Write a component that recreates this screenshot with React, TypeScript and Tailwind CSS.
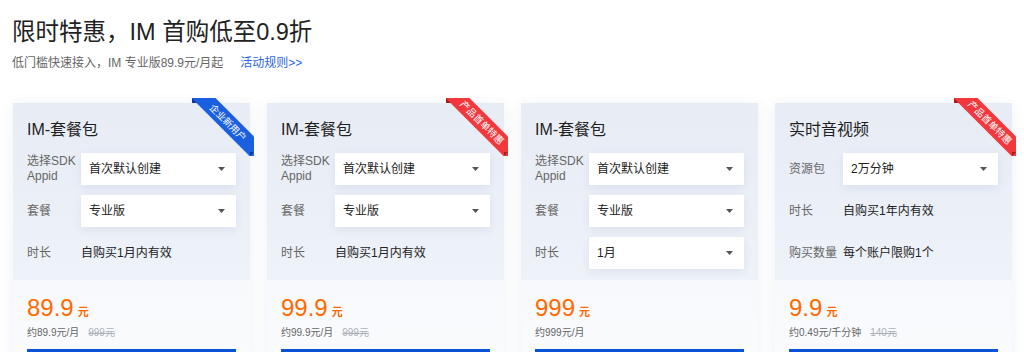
import React from "react";

type Row =
  | { kind: "select"; label: string; value: string }
  | { kind: "text"; label: string; value: string };

type Card = {
  title: string;
  ribbon?: { text: string; color: "blue" | "red" };
  rows: Row[];
  price: string;
  sub: string;
  orig?: string;
};

const cards: Card[] = [
  {
    title: "IM-套餐包",
    ribbon: { text: "企业新用户", color: "blue" },
    rows: [
      { kind: "select", label: "选择SDK Appid", value: "首次默认创建" },
      { kind: "select", label: "套餐", value: "专业版" },
      { kind: "text", label: "时长", value: "自购买1月内有效" },
    ],
    price: "89.9",
    sub: "约89.9元/月",
    orig: "999元",
  },
  {
    title: "IM-套餐包",
    ribbon: { text: "产品首单特惠", color: "red" },
    rows: [
      { kind: "select", label: "选择SDK Appid", value: "首次默认创建" },
      { kind: "select", label: "套餐", value: "专业版" },
      { kind: "text", label: "时长", value: "自购买1月内有效" },
    ],
    price: "99.9",
    sub: "约99.9元/月",
    orig: "999元",
  },
  {
    title: "IM-套餐包",
    rows: [
      { kind: "select", label: "选择SDK Appid", value: "首次默认创建" },
      { kind: "select", label: "套餐", value: "专业版" },
      { kind: "select", label: "时长", value: "1月" },
    ],
    price: "999",
    sub: "约999元/月",
  },
  {
    title: "实时音视频",
    ribbon: { text: "产品首单特惠", color: "red" },
    rows: [
      { kind: "select", label: "资源包", value: "2万分钟" },
      { kind: "text", label: "时长", value: "自购买1年内有效" },
      { kind: "text", label: "购买数量", value: "每个账户限购1个" },
    ],
    price: "9.9",
    sub: "约0.49元/千分钟",
    orig: "140元",
  },
];

function Ribbon({ text, color }: { text: string; color: "blue" | "red" }) {
  const band = color === "blue" ? "bg-[#1a5fe0]" : "bg-[#f2383c]";
  const fold = color === "blue" ? "bg-[#0a3a9e]" : "bg-[#a81c1f]";
  return (
    <div className="absolute -top-[5px] -right-[4px] w-[62px] h-[58px] overflow-hidden pointer-events-none">
      <div
        className={`absolute left-[-19px] top-[16px] w-[110px] h-[17px] rotate-45 ${band} flex items-center justify-center`}
      >
        <span className="text-[9.5px] leading-none text-white whitespace-nowrap">{text}</span>
      </div>
      <div className={`absolute left-0 top-0 w-[5px] h-[5px] ${fold} [clip-path:polygon(0_0,100%_100%,0_100%)]`} />
      <div className={`absolute right-0 bottom-0 w-[4px] h-[4px] ${fold} [clip-path:polygon(0_0,100%_0,0_100%)]`} />
    </div>
  );
}

function Caret() {
  return (
    <svg width="7" height="4" viewBox="0 0 7 4" className="shrink-0">
      <path d="M0 0 L7 0 L3.5 4 Z" fill="#555" />
    </svg>
  );
}

function CardView({ card }: { card: Card }) {
  return (
    <div className="relative w-[237px] shrink-0 shadow-[0_2px_14px_rgba(30,60,120,0.08)]">
      {card.ribbon && <Ribbon {...card.ribbon} />}
      <div className="bg-gradient-to-b from-[#e7ecf5] to-[#eef2f9] px-[14px] pt-[16px] pb-[11px]">
        <div className="text-[16px] leading-[22px] text-[#1f1f1f]">{card.title}</div>
        <div className="mt-[12px] flex flex-col gap-[10px]">
          {card.rows.map((r, i) => (
            <div key={i} className="flex items-center h-[32px]">
              <div className="w-[54px] shrink-0 text-[12px] leading-[15px] text-[#666] whitespace-nowrap">
                {r.label === "选择SDK Appid" ? (
                  <>
                    选择SDK
                    <br />
                    Appid
                  </>
                ) : (
                  r.label
                )}
              </div>
              {r.kind === "select" ? (
                <div className="flex-1 h-[32px] bg-white flex items-center justify-between pl-[8px] pr-[11px] shadow-[0_3px_10px_rgba(30,60,120,0.08)]">
                  <span className="text-[12px] text-[#222]">{r.value}</span>
                  <Caret />
                </div>
              ) : (
                <div className="text-[12px] text-[#222]">{r.value}</div>
              )}
            </div>
          ))}
        </div>
      </div>
      <div className="bg-gradient-to-b from-[#f7f9fc] to-[#fbfcfe] px-[14px] pt-[13px] pb-[20px]">
        <div className="flex items-baseline h-[30px] text-[#ff6a00]">
          <span className="text-[24px] leading-[30px]">{card.price}</span>
          <span className="ml-[4px] text-[11px] font-bold">元</span>
        </div>
        <div className="flex items-center h-[18px] gap-[9px]">
          <span className="text-[10px] text-[#666]">{card.sub}</span>
          {card.orig && <span className="text-[10px] text-[#aab0ba] line-through">{card.orig}</span>}
        </div>
        <div className="mt-[8px] h-[32px] bg-[#0a52d6]" />
      </div>
    </div>
  );
}

export default function App() {
  return (
    <div
      className="w-[1024px] h-[352px] overflow-hidden bg-white"
      style={{ fontFamily: '"Liberation Sans", "Noto Sans CJK SC", sans-serif' }}
    >
      <div className="pl-[12px] pt-[16px]">
        <h1 className="text-[23.5px] leading-[32px] text-[#222]">限时特惠，IM 首购低至0.9折</h1>
        <div className="mt-[6px] flex items-center h-[18px] text-[12px]">
          <span className="text-[#666]">低门槛快速接入，IM 专业版89.9元/月起</span>
          <span className="ml-[17px] text-[#2a66e0]">活动规则&gt;&gt;</span>
        </div>
      </div>
      <div className="mt-[31px] pl-[13px] flex gap-[17px]">
        {cards.map((c, i) => (
          <CardView key={i} card={c} />
        ))}
      </div>
    </div>
  );
}
